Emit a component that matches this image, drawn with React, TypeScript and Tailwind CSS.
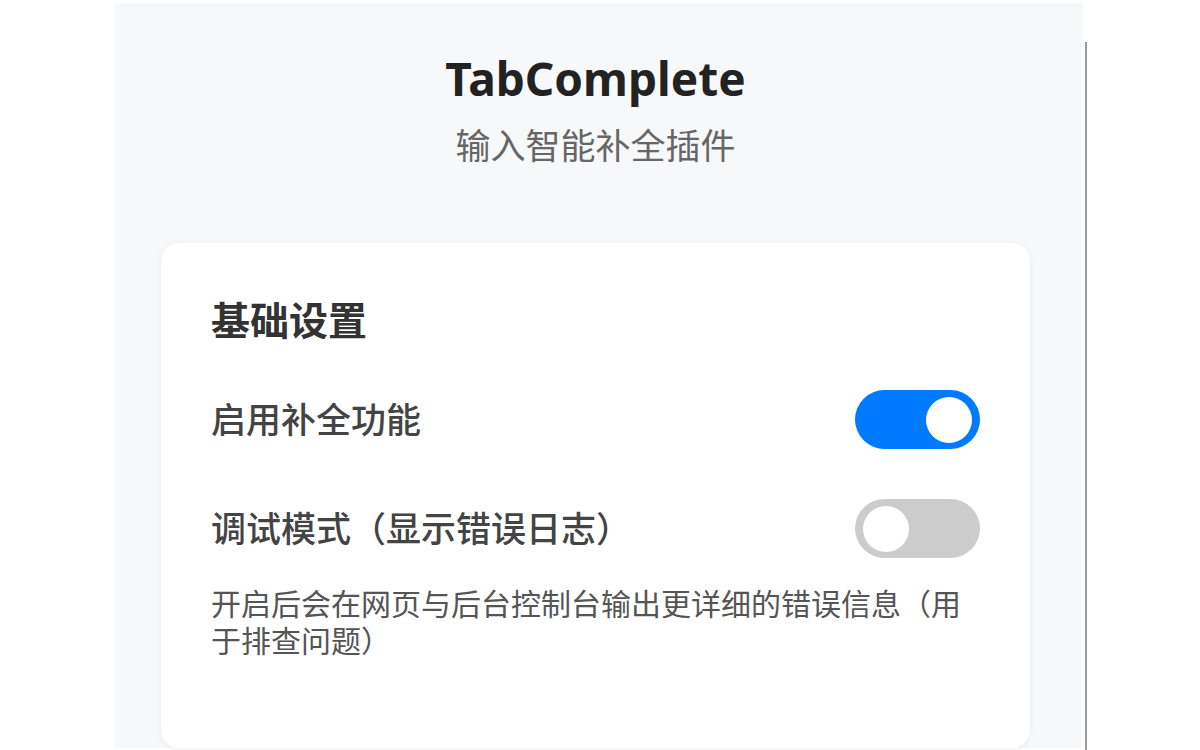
export default function App() {
  const font = {
    fontFamily: '"Noto Sans", "Noto Sans CJK SC", sans-serif',
  }

  return (
    <div
      className="flex h-[750px] w-[1200px] overflow-hidden bg-white"
      style={font}
    >
      <div className="ml-[115px] mt-[3px] flex h-[745px] w-[968px] flex-col items-stretch bg-[#f7f8fa] pl-[46px] pr-[53px]">
        <h1 className="mt-[45px] text-center text-[46px] font-bold leading-[60px] text-[#222]">
          TabComplete
        </h1>
        <p className="mt-[14px] text-center text-[35px] leading-[48px] text-[#666]">
          输入智能补全插件
        </p>

        <div className="mt-[73px] h-[520px] rounded-[18px] bg-white px-[50px] pt-[49px] shadow-[0_1px_6px_rgba(0,0,0,0.06)]">
          <h2 className="text-[39px] font-bold leading-[56px] text-[#333]">
            基础设置
          </h2>

          <div className="mt-[42px] flex items-center justify-between">
            <span className="text-[35px] font-medium leading-[48px] text-[#444]">
              启用补全功能
            </span>
            <Toggle on />
          </div>

          <div className="mt-[50px] flex items-center justify-between">
            <span className="text-[35px] font-medium leading-[48px] text-[#444]">
              调试模式（显示错误日志）
            </span>
            <Toggle on={false} />
          </div>

          <p className="mt-[27px] text-[30px] leading-[37px] text-[#555]">
            开启后会在网页与后台控制台输出更详细的错误信息（用于排查问题）
          </p>
        </div>
      </div>

      <div className="ml-[2px] mt-[42px] h-[708px] w-[2px] bg-[#9a9a9a]" />
    </div>
  )
}

function Toggle({ on }: { on: boolean }) {
  return (
    <div
      className={
        on
          ? "flex h-[59px] w-[125px] shrink-0 items-center justify-end rounded-full bg-[#007bff] px-[8px]"
          : "flex h-[59px] w-[125px] shrink-0 items-center justify-start rounded-full bg-[#cccccc] px-[8px]"
      }
    >
      <div className="h-[46px] w-[46px] rounded-full bg-white" />
    </div>
  )
}
